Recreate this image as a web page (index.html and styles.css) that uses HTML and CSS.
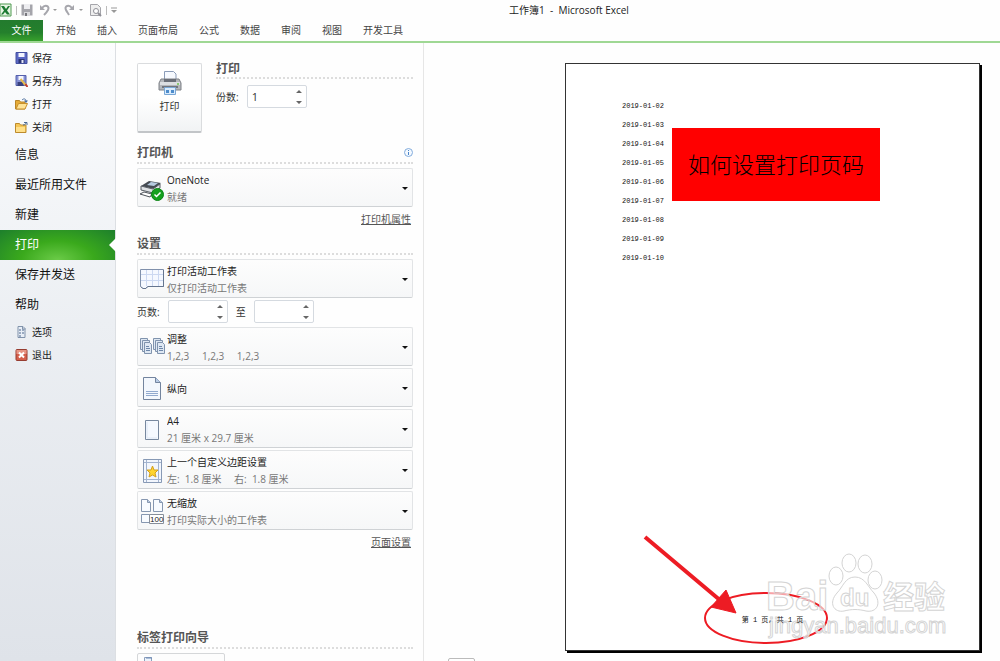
FILE: index.html
```html
<!DOCTYPE html>
<html lang="zh-CN">
<head>
    <meta charset="UTF-8">
    <meta name="viewport" content="width=device-width, initial-scale=1.0">
    <title>工作簿1 - Microsoft Excel</title>
    <link rel="stylesheet" href="styles.css">
</head>
<body>
    <header class="title-bar">
        <div class="quick-access">
            <svg width="12" height="14" viewBox="0 0 12 14"><path d="M0 1h11v12H0z" fill="#e8f5e4" stroke="#4e9a50"/><path d="M1 3l3 0 2 3 2-3h2L7 7.500l3 4H7L5 9l-2 2.500H1l3-4z" fill="#1c7a32"/></svg>
            <span class="divider"></span>
            <button class="tool" aria-label="保存"><svg width="12" height="12" viewBox="0 0 12 12"><path d="M.5.5h11v11H.5z" fill="#a5a5ab"/><path d="M3 0h6v5H3z" fill="#ededf0"/><path d="M3 8h6v4H3z" fill="#d8d8dc"/><path d="M4 9h2v3H4z" fill="#77777d"/></svg></button>
            <button class="tool undo" aria-label="撤消"><svg width="18" height="12" viewBox="0 0 18 12"><path d="M1 1v5h5z" fill="#a6a6ac"/><path d="M3 4c3-4 8-2 6 2-1 2-2 3-4 5" fill="none" stroke="#a6a6ac" stroke-width="2"/><path d="M14 5h4l-2 2z" fill="#999"/></svg></button>
            <button class="tool redo" aria-label="恢复"><svg width="20" height="12" viewBox="0 0 20 12"><path d="M10 1v5H5z" fill="#a6a6ac"/><path d="M8 4C5 0 0 2 2 6c1 2 2 3 3 5" fill="none" stroke="#a6a6ac" stroke-width="2"/><path d="M15 5h4l-2 2z" fill="#999"/></svg></button>
            <button class="tool" aria-label="打印预览"><svg width="12" height="13" viewBox="0 0 12 13"><path d="M.5.500h7l3 3v8H.5z" fill="#eee" stroke="#a5a5aa"/><circle cx="6" cy="7" r="2.500" fill="#fff" stroke="#909097"/><path d="M8 9l3 3" stroke="#909097" stroke-width="2"/></svg></button>
            <span class="divider"></span>
            <button class="tool more" aria-label="自定义快速访问工具栏"><svg width="6" height="7" viewBox="0 0 6 7"><path d="M0 1h6" stroke="#999"/><path d="M0 3h6L3 6z" fill="#999"/></svg></button>
        </div>
        <h1 class="window-title">工作簿1&nbsp; -&nbsp; Microsoft Excel</h1>
    </header>

    <nav class="ribbon">
        <a class="tab file-tab" href="#">文件</a>
        <a class="tab" href="#">开始</a>
        <a class="tab" href="#">插入</a>
        <a class="tab" href="#">页面布局</a>
        <a class="tab" href="#">公式</a>
        <a class="tab" href="#">数据</a>
        <a class="tab" href="#">审阅</a>
        <a class="tab" href="#">视图</a>
        <a class="tab" href="#">开发工具</a>
    </nav>

    <div class="backstage">
        <nav class="sidebar">
            <a class="small-item" href="#"><svg width="12" height="12" viewBox="0 0 12 12"><path d="M.5.500h11v11H.5z" fill="#5b68c4" stroke="#4450a0"/><path d="M3 1h6v4H3z" fill="#f4f6ff"/><path d="M3 7h6v4H3z" fill="#2d3674"/><path d="M6 8h2v3H6z" fill="#e4e8fa"/></svg>保存</a>
            <a class="small-item" href="#"><svg width="12" height="12" viewBox="0 0 12 12"><path d="M.5.500h10v10H.5z" fill="#8590d4" stroke="#5560ac"/><path d="M3 1h5v4H3z" fill="#f4f6ff"/><path d="M2 7h6v4H2z" fill="#39427e"/><path d="M5 4l5 6" stroke="#e5bb4c" stroke-width="2"/><path d="M10 9l2 3" stroke="#c4402c" stroke-width="2"/></svg>另存为</a>
            <a class="small-item" href="#"><svg width="13" height="12" viewBox="0 0 13 12"><path d="M.5 11V2.500h4l1 1.500H10v7z" fill="#e6ac38" stroke="#b98528"/><path d="M1 11l2.500-5.500h9L10 11z" fill="#ffe396" stroke="#c8902c"/><path d="M7 2c2-2 4-1 4 1" fill="none" stroke="#4d6f9e"/><path d="M9 2.500h4L11 5z" fill="#4d6f9e"/></svg>打开</a>
            <a class="small-item" href="#"><svg width="13" height="12" viewBox="0 0 13 12"><path d="M.5 11.500v-9h4l1 1.500H11v7.500z" fill="#f6c757" stroke="#bd8b2c"/><path d="M1 6h9v5H1z" fill="#ffe08a"/><path d="M8 4c2 0 3-1 3-3M9 1.500h3V4" fill="none" stroke="#4a6a94"/></svg>关闭</a>
            <a class="large-item" href="#">信息</a>
            <a class="large-item" href="#">最近所用文件</a>
            <a class="large-item" href="#">新建</a>
            <a class="large-item active" href="#">打印</a>
            <a class="large-item" href="#">保存并发送</a>
            <a class="large-item" href="#">帮助</a>
            <a class="small-item" href="#"><svg width="12" height="12" viewBox="0 0 12 12"><path d="M2.500.500h5l2 2v9h-7z" fill="#e8eef6" stroke="#8193ab"/><path d="M3.500 4h2m1 0h2m-5 3h2m1 0h2m-5 3h2" stroke="#4d668c"/><path d="M7 0v3h3" fill="none" stroke="#8193ab"/></svg>选项</a>
            <a class="small-item" href="#"><svg width="12" height="12" viewBox="0 0 12 12"><rect x=".5" y=".5" width="11" height="11" rx="1" fill="#d45f4c" stroke="#963d31"/><path d="M1 1h10v4H1z" fill="#e69484"/><path d="M3.500 3.500l5 5m0-5l-5 5" stroke="#fff" stroke-width="2"/></svg>退出</a>
        </nav>

        <section class="settings">
            <div class="print-top">
                <button class="print-button">
                    <svg width="24" height="25" viewBox="0 0 24 25"><path d="M6.500 11V.500h9l2.500 2.500v8z" fill="#f7faff" stroke="#8b9cb8"/><path d="M3 8h18l2 4v7H1v-7z" fill="#b4b6ba" stroke="#7f8288"/><path d="M2 11h20v3H2z" fill="#dcdee1"/><path d="M6 8h12v3H6z" fill="#6a6e76"/><path d="M4 16h16" stroke="#71757c" stroke-width="2"/><circle cx="20" cy="13" r="1" fill="#6ec04c"/><path d="M6.500 16.500h11v7h-11z" fill="#d9ebfc" stroke="#7aa7d5"/><path d="M8 19h3v3H8zm5 0h3v3h-3z" fill="#4d8ccc"/></svg>
                    <span>打印</span>
                </button>
                <div class="print-side">
                    <h2>打印</h2>
                    <div class="field">
                        <label for="copies">份数:</label>
                        <span class="spinner">
                            <input type="number" id="copies" value="1" min="1">
                            <svg width="6" height="14" viewBox="0 0 6 14"><path d="M0 3l3-3 3 3zM0 11h6l-3 3z" fill="#666"/></svg>
                        </span>
                    </div>
                </div>
            </div>

            <div class="heading">
                <h2>打印机</h2>
                <svg width="9" height="9" viewBox="0 0 9 9"><circle cx="4.500" cy="4.500" r="4" fill="#f4f9ff" stroke="#83acdc"/><path d="M4.500 2v1m0 1v3" stroke="#4b86c9"/></svg>
            </div>
            <div class="picker">
                <select aria-label="打印机"><option>OneNote</option></select>
                <svg class="icon" width="26" height="26" viewBox="0 0 26 26"><path d="M2 10l8-5 12 2-7 6z" fill="#454b52"/><path d="M8 9l4-3 7 1-4 3z" fill="#b7cbe0"/><path d="M2 10v4l12 3 7-5V8l-7 5z" fill="#dfe2e5" stroke="#555b62"/><path d="M1 18l4-2 8 2-2 3z" fill="#fff" stroke="#4e545b"/><circle cx="18.500" cy="18.500" r="6" fill="#16a01d" stroke="#0b8414"/><path d="M15.500 18.500l2 2 4-4" fill="none" stroke="#fff" stroke-width="1.500"/></svg>
                <span class="note">就绪</span>
            </div>
            <a class="more-link" href="#">打印机属性</a>

            <div class="heading">
                <h2>设置</h2>
            </div>
            <div class="picker">
                <select aria-label="打印范围"><option>打印活动工作表</option></select>
                <svg class="icon" width="26" height="26" viewBox="0 0 26 26"><path d="M1.500 2.500h23v17h-16l-2 2h-3l-2-2z" fill="#f5f8ff" stroke="#8090ab"/><path d="M2 7.500h22M2 13.500h22M7.500 3v16M13.500 3v16M19.500 3v16" stroke="#ccd8f1"/><path d="M2 19.500l2 2h3l2-2h15.500V3" fill="none" stroke="#65758f"/></svg>
                <span class="note">仅打印活动工作表</span>
            </div>
            <div class="field pages">
                <label for="from">页数:</label>
                <span class="spinner">
                    <input type="number" id="from" min="1">
                    <svg width="6" height="14" viewBox="0 0 6 14"><path d="M0 3l3-3 3 3zM0 11h6l-3 3z" fill="#666"/></svg>
                </span>
                <label for="to">至</label>
                <span class="spinner">
                    <input type="number" id="to" min="1">
                    <svg width="6" height="14" viewBox="0 0 6 14"><path d="M0 3l3-3 3 3zM0 11h6l-3 3z" fill="#666"/></svg>
                </span>
            </div>
            <div class="picker-list">
                <div class="picker">
                    <select aria-label="调整"><option>调整</option></select>
                    <svg class="icon" width="26" height="26" viewBox="0 0 26 26"><g fill="#dfe8f3" stroke="#8093ad"><path d="M1.500 3.500h7v11h-7z"/><path d="M3.500 5.500h7v11h-7z"/><path d="M5.500 7.500h5l2 2v9h-7z"/><path d="M14.500 3.500h7v11h-7z"/><path d="M16.500 5.500h7v11h-7z"/><path d="M18.500 7.500h5l2 2v9h-7z"/></g><path d="M7 11.500h3m-3 2h4m-4 2h4M20 11.500h3m-3 2h4m-4 2h4" stroke="#6f88aa"/></svg>
                    <span class="note">1,2,3&emsp; 1,2,3&emsp; 1,2,3</span>
                </div>
                <div class="picker single">
                    <select aria-label="纸张方向"><option>纵向</option></select>
                    <svg class="icon" width="26" height="26" viewBox="0 0 26 26"><path d="M4.500 1.500h12l5 5v17h-17z" fill="#f3f7fd" stroke="#73849e"/><path d="M16.500 1.500v5h5" fill="#b8cbe6" stroke="#73849e"/><path d="M7 15.500h12m-12 2h12m-12 2h12" stroke="#91a9ce"/></svg>
                </div>
                <div class="picker">
                    <select aria-label="纸张大小"><option>A4</option></select>
                    <svg class="icon" width="26" height="26" viewBox="0 0 26 26"><path d="M6.500 3.500h13v19h-13z" fill="#f5f9ff" stroke="#77889f"/><path d="M8 5v16h10" fill="none" stroke="#dee7f4"/></svg>
                    <span class="note">21 厘米 x 29.7 厘米</span>
                </div>
                <div class="picker">
                    <select aria-label="页边距"><option>上一个自定义边距设置</option></select>
                    <svg class="icon" width="26" height="26" viewBox="0 0 26 26"><path d="M4.500 1.500h18v23h-18z" fill="#f2f6fd" stroke="#8799b5"/><path d="M7.500 2v22M19.500 2v22M5 4.500h17M5 21.500h17" stroke="#a3b4d0"/><path d="M13.500 8l1.500 4h4l-3 3 1 4-3.500-2L10 19l1-4-3-3h4z" fill="#ffd52f" stroke="#d3a01f"/></svg>
                    <span class="note">左:&nbsp; 1.8 厘米&emsp; 右:&nbsp; 1.8 厘米</span>
                </div>
                <div class="picker">
                    <select aria-label="缩放"><option>无缩放</option></select>
                    <svg class="icon" width="26" height="26" viewBox="0 0 26 26"><g fill="#f8fbff" stroke="#8697b0"><path d="M2.500.500h6l3 3v9h-9z"/><path d="M14.500.500h6l3 3v9h-9z"/><path d="M2.500 15.500h8v8h-8z"/><path d="M8.500.500v3h3M20.500.500v3h3" fill="#bccde4"/></g><path d="M10.500 15.500h14v9h-14z" fill="#fff" stroke="#878f9b"/><text class="scale-text" x="11" y="23">100</text></svg>
                    <span class="note">打印实际大小的工作表</span>
                </div>
            </div>
            <a class="more-link" href="#">页面设置</a>

            <div class="heading wizard">
                <h2>标签打印向导</h2>
            </div>
            <button class="wizard-button" aria-label="标签打印向导"><svg width="14" height="14" viewBox="0 0 14 14"><path d="M2.500 3.500h7v10h-7z" fill="#edf3fb" stroke="#8da0bd"/><path d="M4 4h6" stroke="#6a89b5"/></svg></button>
        </section>

        <main class="preview">
            <div class="sheet">
                <div class="cells">
                    <table>
                        <tr><td>2019-01-02</td></tr>
                        <tr><td>2019-01-03</td></tr>
                        <tr><td>2019-01-04</td></tr>
                        <tr><td>2019-01-05</td></tr>
                        <tr><td>2019-01-06</td></tr>
                        <tr><td>2019-01-07</td></tr>
                        <tr><td>2019-01-08</td></tr>
                        <tr><td>2019-01-09</td></tr>
                        <tr><td>2019-01-10</td></tr>
                    </table>
                    <p class="banner">如何设置打印页码</p>
                </div>
                <p class="page-number">第 1 页, 共 1 页</p>

                <svg class="marks" width="320" height="130" viewBox="0 0 320 130">
                    <!-- ellipse and arrow around the page number -->
                    <ellipse cx="131" cy="96" rx="61" ry="25" fill="none" stroke="#ed1c24" stroke-width="2"/>
                    <path d="M10 15L86 79" stroke="#ed1c24" stroke-width="4"/>
                    <path d="M101 91L91 68 76 85z" fill="#ed1c24" stroke="#ed1c24"/>
                    <g class="watermark">
                        <text class="logo" x="131" y="88">Bai</text>
                        <path d="M220 55c-10 0-12 10-18 16-9 10-3 20 7 18 8-2 14-2 22 0 11 2 16-8 8-18-6-6-9-16-19-16z"/>
                        <ellipse cx="201" cy="54" rx="7" ry="9"/>
                        <ellipse cx="214" cy="41" rx="7" ry="9"/>
                        <ellipse cx="230" cy="42" rx="7" ry="9"/>
                        <ellipse cx="240" cy="58" rx="7" ry="9"/>
                        <text class="du" x="205" y="84">du</text>
                        <text class="jingyan" x="248" y="86">经验</text>
                        <text class="site" x="134" y="111">jingyan.baidu.com</text>
                    </g>
                </svg>
            </div>
            <input class="page-input" type="text" aria-label="当前页">
        </main>
    </div>
</body>
</html>
```
FILE: styles.css
```css
* {
    box-sizing: border-box;
}
body {
    margin: 0;
    height: 100vh;
    display: flex;
    flex-direction: column;
    overflow: hidden;
    background-color: #fefefe;
    color: #333;
    font-family: "Open Sans", "Noto Sans CJK SC", sans-serif;
    font-size: 10px;
    line-height: 16px;
}
button, input, select {
    font: inherit;
    color: inherit;
}
a {
    color: inherit;
    text-decoration: none;
}
h1, h2, p {
    margin: 0;
    font-weight: normal;
}
svg {
    display: block;
    flex: none;
}

/* title bar */
.title-bar {
    display: grid;
    grid-template-columns: 1fr auto 1fr;
    align-items: center;
    height: 20px;
    padding-right: 4px;
    flex: none;
}
.quick-access {
    display: flex;
    align-items: center;
    gap: 4px;
}
.divider {
    width: 1px;
    height: 9px;
    background-color: #bbb;
}
.tool {
    padding: 0;
    border: none;
    background: none;
}
.undo {
    margin-left: 2px;
}
.redo {
    margin: 0 2px 0 3px;
}
.window-title {
    grid-column: 2;
    margin-left: 142px;
    font-size: 10px;
    color: #222;
}

/* ribbon tabs */
.ribbon {
    display: flex;
    gap: 1px;
    height: 23px;
    flex: none;
    border-bottom: 2px solid #9fd894;
}
.tab {
    padding: 1px 10px 0;
    line-height: 18px;
    color: #444;
}
.file-tab {
    width: 43px;
    margin-right: 2px;
    text-align: center;
    color: #fff;
    background: linear-gradient(#237b2e, #24802c 60%, #37a02c);
}

/* backstage view */
.backstage {
    flex: 1;
    display: flex;
    min-height: 0;
}
.sidebar {
    width: 116px;
    flex: none;
    padding-top: 3px;
    border-right: 1px solid #dcdfe3;
    background: linear-gradient(#fcfdfe, #eceff3 45%, #dfe3e9);
    color: #222;
}
.small-item {
    display: flex;
    align-items: center;
    gap: 4px;
    height: 23px;
    padding-left: 15px;
}
.small-item svg {
    width: 13px;
}
.large-item {
    display: flex;
    align-items: center;
    height: 30px;
    padding-left: 15px;
    font-size: 12px;
    color: #111;
}
.small-item + .large-item {
    margin-top: 2px;
}
.active {
    position: relative;
    color: #fff;
    background: radial-gradient(ellipse at 50% 100%, #6bcb48, #3aa91c 45%, #1d7f2c);
}
.active::after {
    content: "";
    position: absolute;
    right: -1px;
    top: 8px;
    border: 7px solid transparent;
    border-left: none;
    border-right-color: #fefefe;
}

/* print settings */
.settings {
    width: 308px;
    flex: none;
    padding: 20px 10px 0 21px;
    border-right: 1px solid #e6e6e6;
    overflow: hidden;
}
.settings h2 {
    font-size: 12px;
    font-weight: bold;
    color: #555;
}
.print-top {
    display: flex;
    gap: 14px;
}
.print-button {
    display: flex;
    flex-direction: column;
    align-items: center;
    gap: 2px;
    width: 65px;
    height: 70px;
    padding: 0 0 10px;
    border: 1px solid #dadcde;
    border-bottom: 2px solid #c2c5c8;
    border-radius: 2px;
    justify-content: center;
    background: linear-gradient(#fff 50%, #f1f3f4);
}
.print-side {
    flex: 1;
}
.print-side h2 {
    padding-bottom: 2px;
    line-height: 12px;
    border-bottom: 2px dotted #ddd;
}
.field {
    display: flex;
    align-items: center;
    gap: 8px;
}
.print-side .field {
    margin-top: 6px;
}
.spinner {
    display: flex;
    align-items: center;
    width: 60px;
    height: 23px;
    padding-right: 4px;
    border: 1px solid #d5dae0;
    border-radius: 2px;
    background-color: #fff;
}
.spinner input {
    flex: 1;
    min-width: 0;
    padding: 0 4px;
    border: none;
    outline: none;
    background: none;
    font-size: 11px;
    appearance: textfield;
}
.spinner input::-webkit-inner-spin-button {
    display: none;
}
.heading {
    display: flex;
    justify-content: space-between;
    align-items: center;
    height: 21px;
    margin-bottom: 4px;
    border-bottom: 2px dotted #ddd;
}
.print-top + .heading {
    margin-top: 10px;
}
.more-link + .heading {
    margin-top: 7px;
}
.picker {
    display: grid;
    grid-template-columns: 30px 1fr 16px;
    grid-template-rows: 20px 19px;
    border: 1px solid #e2e4e6;
    border-bottom-color: #cfd2d5;
    border-radius: 2px;
    height: 39px;
    background: linear-gradient(#fdfdfd, #f6f7f8);
}
.picker select {
    grid-area: 1 / 1 / 3 / 4;
    appearance: none;
    padding: 0 0 17px 29px;
    border: none;
    background: none;
    color: #222;
}
.picker.single select {
    padding-bottom: 0;
}
.icon {
    grid-area: 1 / 1 / 3 / 2;
    align-self: center;
    margin-left: 1px;
    pointer-events: none;
}
.note {
    grid-area: 2 / 2 / 3 / 3;
    margin-left: -1px;
    white-space: nowrap;
    pointer-events: none;
    color: #777;
}
.picker::after {
    content: "";
    grid-area: 1 / 3 / 3 / 4;
    align-self: center;
    width: 0;
    margin-left: 6px;
    border: 3px solid transparent;
    border-top-color: #111;
    border-bottom: none;
    pointer-events: none;
}
.scale-text {
    font-family: "Liberation Sans", sans-serif;
    font-size: 8px;
    fill: #222;
}
.more-link {
    display: block;
    width: max-content;
    margin: 4px 2px 3px auto;
    text-decoration: underline;
    color: #555;
}
.pages {
    margin: 2px 0 4px;
}
.picker-list {
    display: grid;
    gap: 2px;
}
.more-link + .wizard {
    margin-top: 78px;
}
.wizard-button {
    width: 88px;
    padding: 0 4px;
    border: 1px solid #d5d7d9;
    border-radius: 2px;
    background-color: #fdfdfd;
}

/* preview pane */
.preview {
    flex: 1;
    display: flex;
    flex-direction: column;
    padding: 20px 20px 0 141px;
}
.sheet {
    position: relative;
    flex: 1;
    display: flex;
    flex-direction: column;
    justify-content: space-between;
    padding: 33px 56px 22px;
    border: 1px solid #333;
    box-shadow: 2px 2px 0 #000;
    background-color: #fff;
}
.cells {
    display: flex;
    align-items: flex-start;
    gap: 8px;
}
.cells table {
    border-collapse: collapse;
}
.cells td {
    height: 19px;
    padding: 0;
    font-family: "Liberation Mono", monospace;
    font-size: 7px;
    line-height: 19px;
    color: #111;
}
.banner {
    margin-top: 31px;
    padding: 0 16px;
    background-color: #f00;
    color: #000;
    font-size: 22px;
    font-weight: 300;
    line-height: 73px;
    white-space: nowrap;
}
.page-number {
    position: relative;
    z-index: 1;
    text-align: center;
    font-family: "Liberation Mono", "Noto Sans CJK SC", monospace;
    font-size: 7px;
    line-height: 16px;
    color: #111;
}
.marks {
    position: absolute;
    left: 69px;
    bottom: -2px;
}
.watermark {
    fill: #fff;
    fill-opacity: 0.6;
    stroke: #d4d4d4;
    stroke-width: 1px;
    font-family: "Liberation Sans", "Noto Sans CJK SC", sans-serif;
    font-weight: bold;
}
.logo {
    font-size: 40px;
}
.du {
    font-size: 24px;
}
.jingyan {
    font-size: 31px;
}
.site {
    font-size: 22px;
    font-weight: normal;
}
.page-input {
    width: 27px;
    height: 20px;
    flex: none;
    margin: 7px 0 -17px -117px;
    border: 1px solid #bbb;
    border-radius: 2px;
    background-color: #fff;
}
```
